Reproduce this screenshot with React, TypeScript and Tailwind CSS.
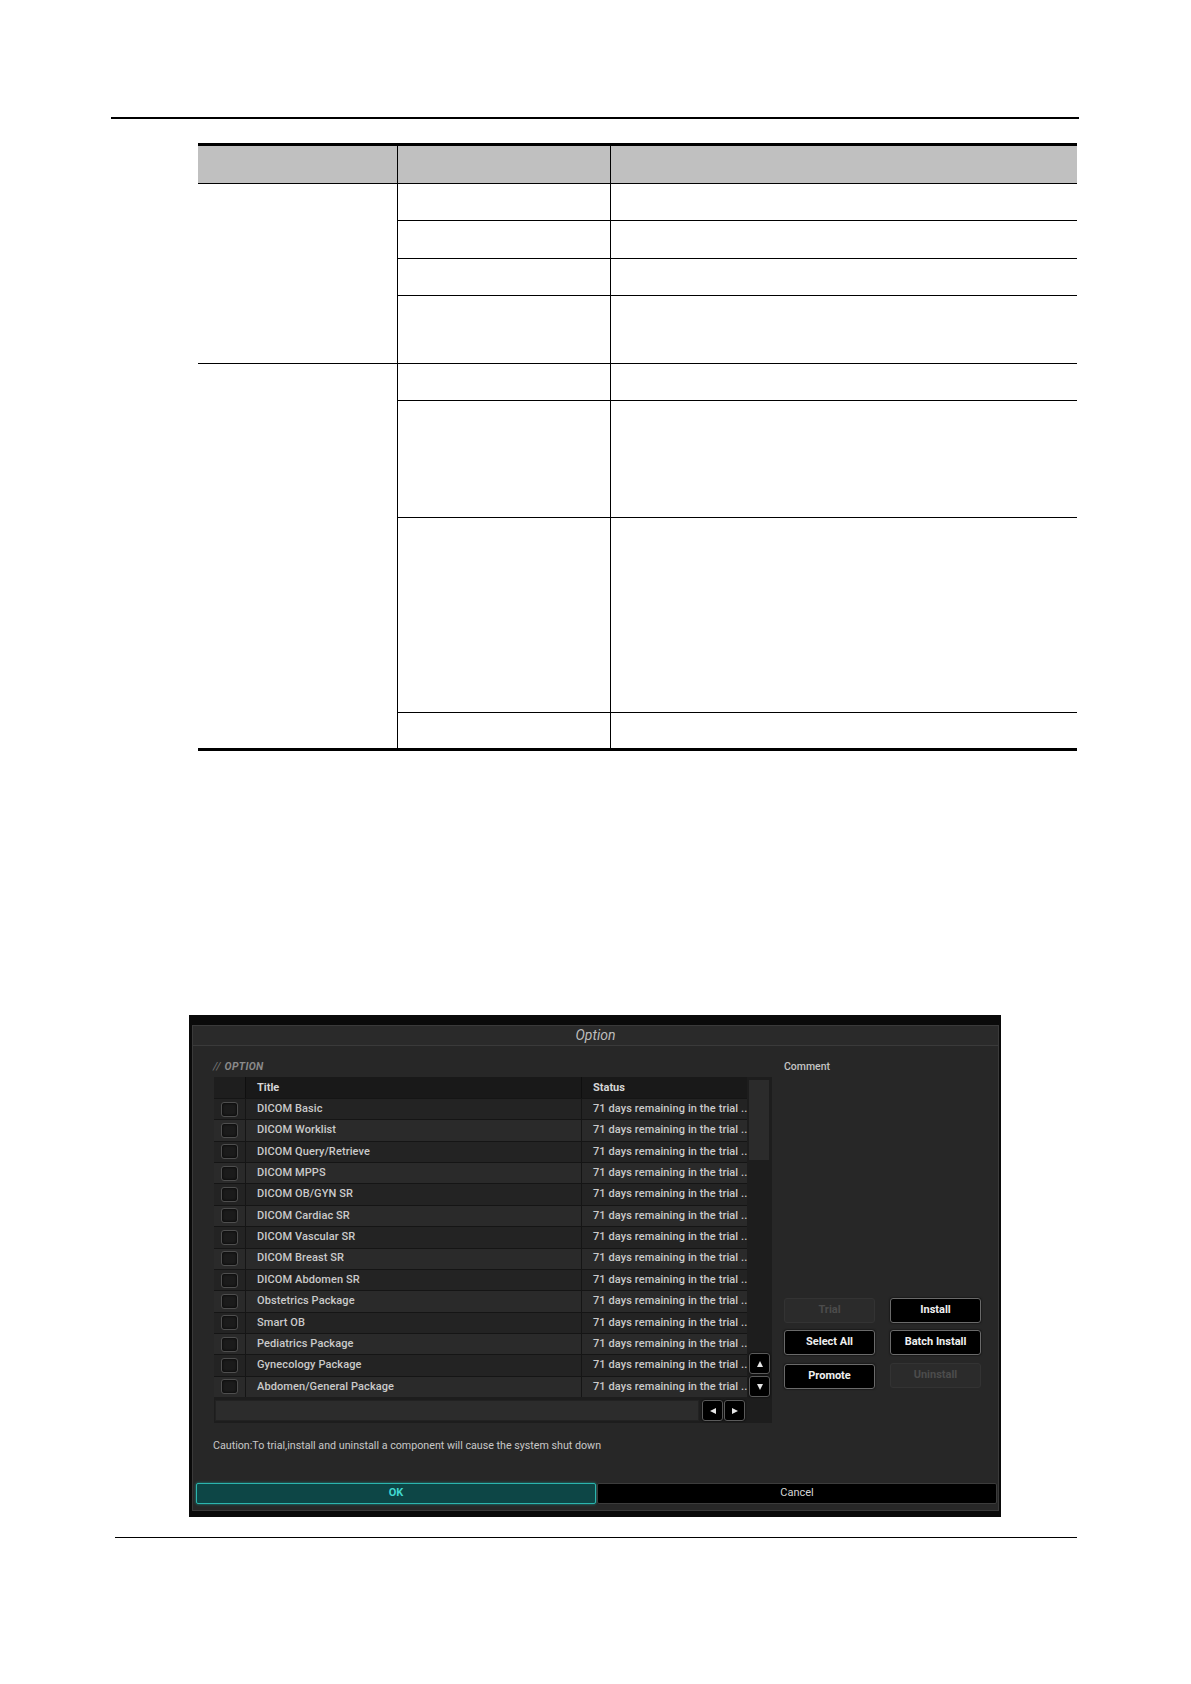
import React from "react";

const OPTIONS = [
  "DICOM Basic",
  "DICOM Worklist",
  "DICOM Query/Retrieve",
  "DICOM MPPS",
  "DICOM OB/GYN SR",
  "DICOM Cardiac SR",
  "DICOM Vascular SR",
  "DICOM Breast SR",
  "DICOM Abdomen SR",
  "Obstetrics Package",
  "Smart OB",
  "Pediatrics Package",
  "Gynecology Package",
  "Abdomen/General Package",
];

function SpecRow({ h, first }: { h: string; first?: boolean }) {
  return (
    <div className={`grid grid-cols-[213px_1fr] ${h} ${first ? "" : "border-t border-black"}`}>
      <div className="border-r border-black" />
      <div />
    </div>
  );
}

function SpecTable() {
  return (
    <div className="ml-[198px] mt-[24px] w-[879px] border-t-[3px] border-b-[3px] border-black">
      <div className="grid grid-cols-[200px_213px_1fr] h-[37px] bg-[#c0c0c0]">
        <div className="border-r border-black" />
        <div className="border-r border-black" />
        <div />
      </div>
      <div className="grid grid-cols-[200px_1fr] border-t border-black">
        <div className="border-r border-black" />
        <div>
          <SpecRow h="h-[36px]" first />
          <SpecRow h="h-[38px]" />
          <SpecRow h="h-[37px]" />
          <SpecRow h="h-[68px]" />
        </div>
      </div>
      <div className="grid grid-cols-[200px_1fr] border-t border-black">
        <div className="border-r border-black" />
        <div>
          <SpecRow h="h-[36px]" first />
          <SpecRow h="h-[117px]" />
          <SpecRow h="h-[195px]" />
          <SpecRow h="h-[36px]" />
        </div>
      </div>
    </div>
  );
}

function Arrow({ dir }: { dir: "up" | "down" | "left" | "right" }) {
  const pts = {
    up: "3,0 6,6 0,6",
    down: "0,0 6,0 3,6",
    left: "6,0 6,6 0,3",
    right: "0,0 6,3 0,6",
  }[dir];
  return (
    <svg width="6" height="6" viewBox="0 0 6 6">
      <polygon points={pts} fill="#e6e6e6" />
    </svg>
  );
}

function ArrowButton({ dir }: { dir: "up" | "down" | "left" | "right" }) {
  return (
    <div className="w-[21px] h-[21px] flex items-center justify-center bg-black border border-[#5a5a5a] rounded-[3px] shadow-[0_0_2px_#000]">
      <Arrow dir={dir} />
    </div>
  );
}

function Checkbox() {
  return (
    <div className="w-[17px] h-[15px] rounded-[3px] border border-[#4e4e4e] bg-[#1b1b1b] shadow-[inset_0_0_3px_#000]" />
  );
}

function OptionTable() {
  return (
    <div className="w-[558px] h-[346px] bg-[#1d1d1d] flex flex-col">
      <div className="flex">
        <div className="w-[533px]">
          <div className="flex h-[21px] bg-[#191919] text-[11px] font-bold text-[#d6d6d6] leading-[21px]">
            <div className="w-[32px] bg-[#1e1e1e] border-r border-[#0f0f0f]" />
            <div className="w-[336px] pl-[11px] border-r border-[#0f0f0f]">Title</div>
            <div className="flex-1 pl-[11px]">Status</div>
          </div>
          {OPTIONS.map((name, i) => (
            <div
              key={name}
              className={`flex h-[21.36px] border-t border-[#151515] text-[11px] font-medium tracking-[0.1px] text-[#cacaca] ${
                i % 2 === 0 ? "bg-[#232323]" : "bg-[#2a2a2a]"
              }`}
            >
              <div className="w-[32px] flex items-center pl-[7px] border-r border-[#151515]">
                <Checkbox />
              </div>
              <div className="w-[336px] pl-[11px] flex items-center border-r border-[#151515]">{name}</div>
              <div className="flex-1 pl-[11px] flex items-center whitespace-nowrap overflow-hidden">
                71 days remaining in the trial ..
              </div>
            </div>
          ))}
        </div>
        <div className="w-[25px] flex flex-col pl-[2px] pr-[3px]">
          <div className="h-[273px] pt-[3px]">
            <div className="h-[80px] bg-[#2b2b2b]" />
          </div>
          <div className="flex flex-col gap-[2px] mt-[3px]">
            <ArrowButton dir="up" />
            <ArrowButton dir="down" />
          </div>
        </div>
      </div>
      <div className="flex h-[26px] items-start">
        <div className="w-[484px] h-[21px] mt-[3px] ml-[1px] bg-[#2c2c2c] border border-[#222222]" />
        <div className="flex gap-[1px] ml-[3px] mt-[3px]">
          <ArrowButton dir="left" />
          <ArrowButton dir="right" />
        </div>
      </div>
    </div>
  );
}

function DlgButton({ label, disabled }: { label: string; disabled?: boolean }) {
  return (
    <div
      className={`w-[91px] h-[25px] flex items-center justify-center rounded-[3px] text-[11px] font-bold ${
        disabled
          ? "bg-[#2b2b2b] border border-[#333333] text-[#4c4c4c]"
          : "bg-black border border-[#6a6a6a] text-[#f0f0f0] shadow-[0_0_2px_#000]"
      }`}
    >
      {label}
    </div>
  );
}

function OptionDialog() {
  return (
    <div className="ml-[189px] mt-[264px] w-[812px] h-[502px] bg-[#0a0a0a] pt-[10px] pl-[3px] pr-[2px] pb-[6px]">
      <div className="h-full border border-[#3a3a3a] bg-[#272727] flex flex-col">
        <div className="h-[20px] border-b border-[#3a3a3a] bg-[#2a2a2a] text-center italic text-[14px] leading-[19px] text-[#bdbdbd]">
          Option
        </div>
        <div className="flex pl-[21px]">
          <div>
            <div className="pt-[13px] h-[29px] leading-[16px] mb-[2px] -ml-[1px] italic font-bold text-[10.5px] text-[#8a8a8a] flex">
              <span className="font-normal text-[#777777] text-[11px] mr-[4px]">//</span>
              <span className="tracking-[0.3px]">OPTION</span>
            </div>
            <OptionTable />
          </div>
          <div className="ml-[12px] flex flex-col">
            <div className="pt-[13px] h-[29px] leading-[16px] text-[10.5px] font-medium text-[#c4c4c4]">Comment</div>
            <div className="mt-[223px] grid grid-cols-[91px_91px] gap-x-[15px]">
              <DlgButton label="Trial" disabled />
              <DlgButton label="Install" />
              <div className="mt-[7px]">
                <DlgButton label="Select All" />
              </div>
              <div className="mt-[7px]">
                <DlgButton label="Batch Install" />
              </div>
              <div className="mt-[9px]">
                <DlgButton label="Promote" />
              </div>
              <div className="mt-[8px]">
                <DlgButton label="Uninstall" disabled />
              </div>
            </div>
          </div>
        </div>
        <div className="pl-[20px] mt-[16px] text-[10.7px] leading-[14px] text-[#c8c8c8]">
          Caution:To trial,install and uninstall a component will cause the system shut down
        </div>
        <div className="mt-auto mb-[6px] flex pl-[3px] pr-[1px] gap-[1px]">
          <div className="w-[400px] h-[21px] flex items-center justify-center bg-[#0d4646] border border-[#2bb5ae] rounded-[2px] text-[11px] font-bold text-[#40d6cf] shadow-[0_0_3px_#1a8a85]">
            OK
          </div>
          <div className="flex-1 h-[21px] flex items-center justify-center bg-black border border-[#3c3c3c] rounded-[2px] text-[11px] text-[#d4d4d4]">
            Cancel
          </div>
        </div>
      </div>
    </div>
  );
}

export default function App() {
  return (
    <div className="w-[1191px] h-[1684px] bg-white overflow-hidden font-['Roboto',sans-serif]">
      <div className="pt-[117px] pl-[111px]">
        <div className="w-[968px] h-[2px] bg-black" />
      </div>
      <SpecTable />
      <OptionDialog />
      <div className="ml-[115px] mt-[20px] w-[962px] h-px bg-black" />
    </div>
  );
}
